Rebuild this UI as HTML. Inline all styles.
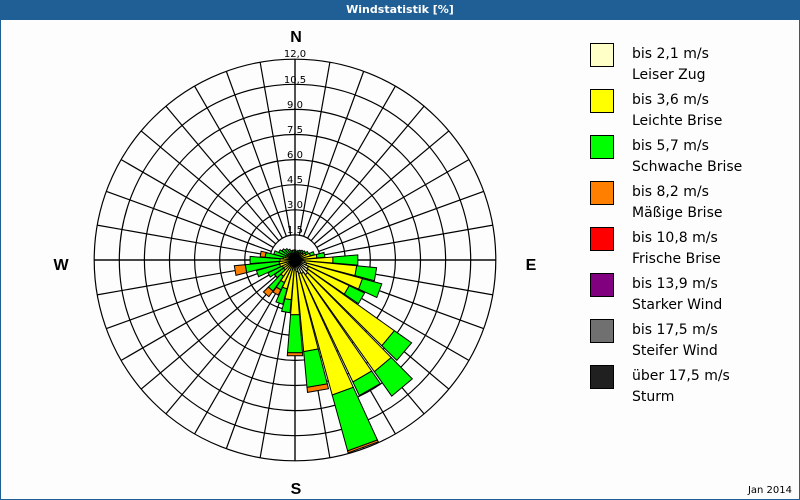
<!DOCTYPE html>
<html><head><meta charset="utf-8"><style>
html,body{margin:0;padding:0}
body{width:800px;height:500px;overflow:hidden;background:#fcfdfc;font-family:"DejaVu Sans","Liberation Sans",sans-serif}
#frame{position:absolute;left:0;top:0;width:798px;height:498px;border:1px solid #1f5f96}
#title{position:absolute;left:0;top:0;width:800px;height:20px;background:#1f5f96;color:#fff;font-weight:bold;font-size:11px;line-height:20px;text-align:center}
.lg{position:absolute;left:590px;width:22px;height:22px;border:1px solid #000}
.lt{position:absolute;left:632px;font-size:14px;line-height:21px;color:#000}
#date{position:absolute;right:8px;bottom:4px;font-size:10px}
</style></head><body>
<div id="frame"></div>
<div id="title">Windstatistik [%]</div>
<svg id="s" width="800" height="500" style="position:absolute;left:0;top:0">
<g id="grid" stroke="#000" stroke-width="1.2" fill="none"></g>
<g id="bars" stroke="#000" stroke-width="1"></g>
<g font-family="DejaVu Sans, sans-serif" font-size="10" fill="#000" text-anchor="middle">
<text x="295" y="57">12,0</text><text x="295" y="83">10,5</text><text x="295" y="108">9,0</text>
<text x="295" y="133">7,5</text><text x="295" y="158">6,0</text><text x="295" y="183">4,5</text>
<text x="295" y="208">3,0</text><text x="295" y="233">1,5</text>
</g>
<g font-family="Liberation Sans, sans-serif" font-size="16" font-weight="bold" text-anchor="middle">
<text x="296" y="42">N</text><text x="296" y="494">S</text><text x="61" y="270">W</text><text x="531" y="270">E</text>
</g>
</svg>
<div class="lg" style="top:43px;background:#ffffc8"></div><div class="lt" style="top:44px">bis 2,1 m/s<br>Leiser Zug</div>
<div class="lg" style="top:89px;background:#ffff00"></div><div class="lt" style="top:90px">bis 3,6 m/s<br>Leichte Brise</div>
<div class="lg" style="top:135px;background:#00ff00"></div><div class="lt" style="top:136px">bis 5,7 m/s<br>Schwache Brise</div>
<div class="lg" style="top:181px;background:#ff8000"></div><div class="lt" style="top:182px">bis 8,2 m/s<br>Mäßige Brise</div>
<div class="lg" style="top:227px;background:#ff0000"></div><div class="lt" style="top:228px">bis 10,8 m/s<br>Frische Brise</div>
<div class="lg" style="top:273px;background:#800080"></div><div class="lt" style="top:274px">bis 13,9 m/s<br>Starker Wind</div>
<div class="lg" style="top:319px;background:#707070"></div><div class="lt" style="top:320px">bis 17,5 m/s<br>Steifer Wind</div>
<div class="lg" style="top:365px;background:#202020"></div><div class="lt" style="top:366px">über 17,5 m/s<br>Sturm</div>
<div id="date">Jan 2014</div>
<script>
var cx=295,cy=260,ns="http://www.w3.org/2000/svg";
var g=document.getElementById('grid'),b=document.getElementById('bars');
function el(p,t,a){var e=document.createElementNS(ns,t);for(var k in a)e.setAttribute(k,a[k]);p.appendChild(e);return e;}
for(var k=1;k<=8;k++)el(g,'circle',{cx:cx,cy:cy,r:25.1*k});
for(var d=0;d<360;d+=10){var a=d*Math.PI/180;el(g,'line',{x1:cx+25.1*Math.sin(a),y1:cy-25.1*Math.cos(a),x2:cx+201*Math.sin(a),y2:cy-201*Math.cos(a)});}
el(g,'line',{x1:94,y1:cy,x2:496,y2:cy});el(g,'line',{x1:cx,y1:59,x2:cx,y2:461});
function pt(r,a){a=a*Math.PI/180;return (cx+r*Math.sin(a)).toFixed(1)+','+(cy-r*Math.cos(a)).toFixed(1);}
function sec(d,r0,r1,c){var w=4.6;el(b,'path',{d:'M'+pt(r0,d-w)+'L'+pt(r1,d-w)+'L'+pt(r1,d+w)+'L'+pt(r0,d+w)+'Z',fill:c});}
var C=['#ffffc8','#ffff00','#00ff00','#ff8000'];
var data=[[0,[3,8,10]],[10,[3,7,9]],[20,[3,8,10]],[30,[3,8,11]],[40,[3,9,12]],[50,[4,10,13]],[60,[4,12,15]],[70,[5,16,20]],[80,[6,22,30]],[90,[8,38,63]],
[100,[10,62,82]],[110,[12,70,90]],[120,[15,60,77]],[130,[16,122,143]],[140,[18,137,167]],[150,[15,135,150]],[160,[14,140,198,200]],[170,[12,92,128,133]],
[180,[10,55,93,96]],[190,[8,40,53]],[200,[7,30,46]],[210,[6,25,33,39]],[220,[5,20,38,45]],[230,[4,14,25]],[240,[4,14,30]],[250,[4,16,40]],[260,[4,16,50,61]],[270,[4,15,45]],
[280,[3,12,30,35]],[290,[3,10,22]],[300,[3,9,18]],[310,[3,9,16]],[320,[3,8,14]],[330,[3,8,12]],[340,[3,7,10]],[350,[3,7,10]]];
data.forEach(function(x){var r=0;x[1].forEach(function(v,i){sec(x[0],r,v,C[i]);r=v;});});
el(b,'circle',{cx:cx,cy:cy,r:4,fill:'#000'});
</script>
</body></html>
